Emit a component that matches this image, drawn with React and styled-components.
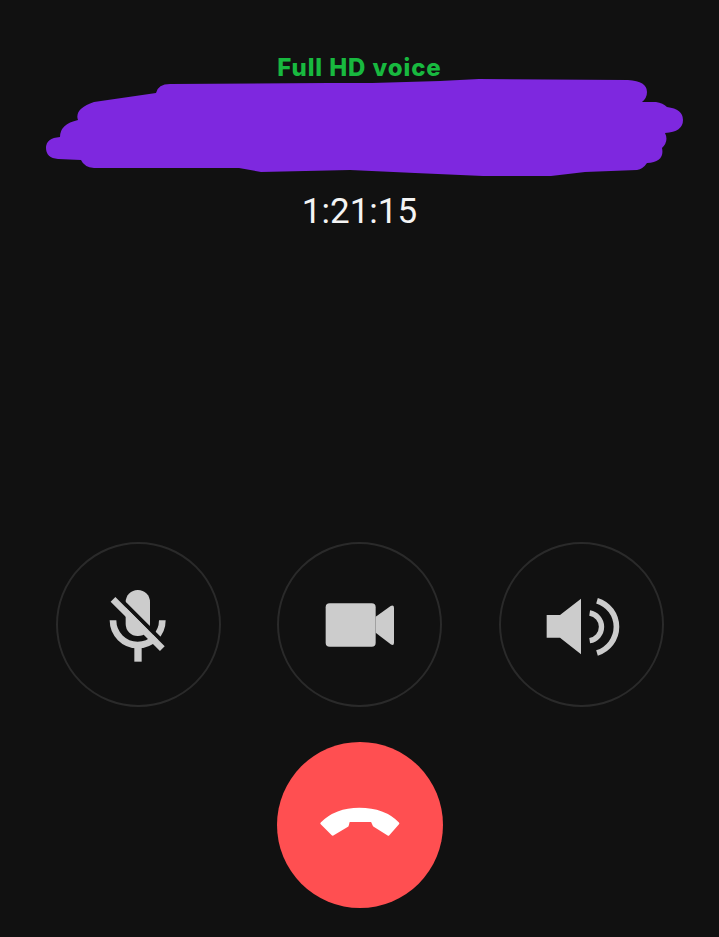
import styled, { createGlobalStyle } from "styled-components";

const GlobalStyle = createGlobalStyle`
    html, body {
        margin: 0;
        padding: 0;
        background-color: #111111;
    }
`

export default function App(){
    return(
        <Screen>
            <GlobalStyle />
            <Quality>Full HD voice</Quality>
            <Scribble viewBox="0 0 719 105" aria-hidden="true">
                <path d="M156 18 Q158 9 170 9 L329 8 L372 8 L440 6 L479 4 L628 5 Q647 6 647 17 Q647 23 642 27 L656 27 Q663 28 667 32 Q683 34 683 45 Q683 57 665 58 Q669 66 662 73 Q665 87 647 88 Q643 94 637 95 L585 97 L551 101 L483 101 L415 98 L350 95 L261 97 L239 93 L94 93 Q84 92 81 85 L58 84 Q46 83 46 73 Q46 63 60 62 Q60 49 78 45 Q74 34 94 27 Z" />
            </Scribble>
            <Timer>1:21:15</Timer>
            <Controls>
                <RoundButton>
                    <Icon viewBox="132 132 270 270">
                        <rect x="230" y="162" width="73" height="138" rx="36" />
                        <path d="M192 253 A74 74 0 0 0 340 253" fill="none" stroke="#cccccc" strokeWidth="20" />
                        <rect x="256" y="335" width="22" height="42" />
                        <path d="M203 179 L345 321" stroke="#111111" strokeWidth="12" />
                        <path d="M192 190 L340 338" stroke="#cccccc" strokeWidth="20" />
                    </Icon>
                </RoundButton>
                <RoundButton>
                    <Icon viewBox="135 132 270 270">
                        <rect x="167" y="202" width="150" height="130" rx="12" />
                        <path d="M317 242 L362 210 Q372 206 372 216 L372 320 Q372 330 362 325 L317 290 Z" />
                    </Icon>
                </RoundButton>
                <RoundButton>
                    <Icon viewBox="142 132 270 270">
                        <path d="M174 237 L214 237 L277 188 L277 355 L214 305 L174 305 Z" />
                        <path d="M303 231 A42 42 0 0 1 303 314" fill="none" stroke="#cccccc" strokeWidth="16" />
                        <path d="M325 194 A82 82 0 0 1 325 351" fill="none" stroke="#cccccc" strokeWidth="17" />
                    </Icon>
                </RoundButton>
            </Controls>
            <EndCall>
                <Icon viewBox="135 135 270 270">
                    <path fill="#ffffff" stroke="#ffffff" strokeWidth="8" strokeLinejoin="round" d="M155 265 C185 235 225 222 268 222 C312 222 355 235 384 265 L355 298 L312 271 L306 257 L236 257 L232 272 L188 298 Z" />
                </Icon>
            </EndCall>
        </Screen>
    )
}

const Screen = styled.div`
    width: 719px;
    height: 937px;
    background-color: #111111;
    display: flex;
    flex-direction: column;
    align-items: center;
    overflow: hidden;
`

const Quality = styled.div`
    margin-top: 53px;
    height: 22px;
    line-height: 30px;
    font-family: "Inter", "Liberation Sans", sans-serif;
    font-weight: 800;
    font-size: 24px;
    letter-spacing: 0.9px;
    color: #18b93f;
`

const Scribble = styled.svg`
    display: block;
    width: 719px;
    height: 105px;
    flex-shrink: 0;
    fill: #7e28df;
`

const Timer = styled.div`
    margin-top: 11px;
    line-height: 42px;
    font-family: "Roboto", "Liberation Sans", sans-serif;
    font-weight: 400;
    font-size: 35px;
    color: #f4f4f4;
`

const Controls = styled.div`
    display: grid;
    grid-template-columns: repeat(3, 165px);
    column-gap: 56.5px;
    margin-top: 309px;
`

const RoundButton = styled.button`
    width: 165px;
    height: 165px;
    padding: 0;
    box-sizing: border-box;
    border: 2px solid #2a2a2a;
    border-radius: 50%;
    background-color: transparent;
    display: flex;
    justify-content: center;
    align-items: center;
`

const EndCall = styled.button`
    width: 166px;
    height: 166px;
    margin-top: 35px;
    padding: 0;
    border: none;
    border-radius: 50%;
    background-color: #ff4f51;
    display: flex;
    justify-content: center;
    align-items: center;
`

const Icon = styled.svg`
    width: 90px;
    height: 90px;
    fill: #cccccc;
`
